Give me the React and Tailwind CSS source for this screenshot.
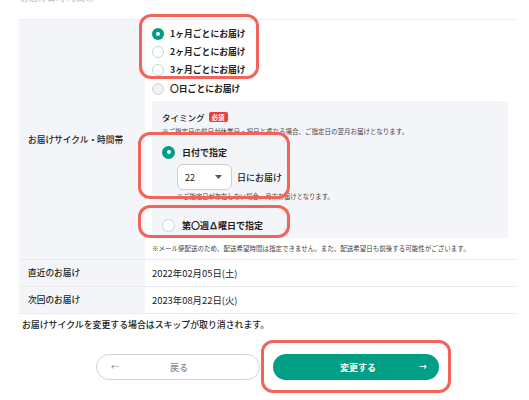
import React from "react";

function Radio({ state, size = 12 }) {
  if (state === "on") {
    return (
      <span
        className="flex items-center justify-center rounded-full bg-[#009d83] shrink-0"
        style={{ width: size, height: size }}
      >
        <span className="w-[4px] h-[4px] rounded-full bg-white" />
      </span>
    );
  }
  if (state === "gray") {
    return (
      <span
        className="rounded-full border border-[#d2d2d2] bg-[#f2f2f2] shrink-0"
        style={{ width: size, height: size }}
      />
    );
  }
  return (
    <span
      className="rounded-full border border-[#b8ddd2] bg-white shrink-0"
      style={{ width: size, height: size }}
    />
  );
}

export default function App() {
  return (
    <div className="relative w-[529px] h-[400px] overflow-hidden bg-white text-[#222] font-['Noto_Sans_CJK_JP','Noto_Sans',sans-serif]">
      {/* cut-off heading */}
      <div className="h-[19px] pl-[20px] overflow-hidden">
        <div className="-mt-[8px] text-[9px] leading-[12px] text-[#b5b5b5]">お届け日時 時間帯</div>
      </div>

      {/* table */}
      <div className="ml-[19px] w-[497px] border-t border-[#eeeeee]">
        {/* row 1 */}
        <div className="flex border-b border-[#eaeaee]">
          <div className="w-[126px] shrink-0 bg-[#f4f5f9] flex items-center pl-[9px] text-[8.7px] font-medium">
            お届けサイクル・時間帯
          </div>
          <div className="flex-1 pl-[7px] pt-[5px]">
            <div className="flex flex-col">
              {[
                ["on", "1ヶ月ごとにお届け"],
                ["off", "2ヶ月ごとにお届け"],
                ["off", "3ヶ月ごとにお届け"],
              ].map(([s, t]) => (
                <div key={t} className="h-[18px] flex items-center gap-[6px]">
                  <Radio state={s} size={12} />
                  <span className="text-[8.8px] font-bold leading-none">{t}</span>
                </div>
              ))}
              <div className="h-[18px] mt-[1px] flex items-center gap-[6px]">
                <Radio state="gray" size={12} />
                <span className="text-[8.8px] font-bold leading-none">〇日ごとにお届け</span>
              </div>
            </div>

            {/* timing box */}
            <div className="mt-[3px] w-[356px] h-[137px] bg-[#f4f5f9] pl-[10px] pt-[9px]">
              <div className="flex items-center gap-[4px] h-[14px]">
                <span className="text-[8.5px] font-medium leading-none">タイミング</span>
                <span className="bg-[#ec3b3b] text-white text-[6.5px] font-bold leading-none px-[3px] py-[2px] rounded-[2px]">必須</span>
              </div>
              <div className="mt-[2px] text-[6.5px] leading-[10px] text-[#444]">
                ※ご指定日の前日が休業日・祝日と重なる場合、ご指定日の翌月お届けとなります。
              </div>
              <div className="mt-[9px] flex items-center gap-[7px] h-[14px]">
                <Radio state="on" size={13} />
                <span className="text-[9px] font-bold leading-none">日付で指定</span>
              </div>
              <div className="mt-[5px] pl-[15px] flex items-center gap-[5px]">
                <div className="w-[55px] h-[26px] bg-white border border-[#cfcfcf] rounded-[6px] flex items-center justify-between pl-[7px] pr-[9px]">
                  <span className="text-[9px] leading-none">22</span>
                  <svg width="7" height="4" viewBox="0 0 7 4">
                    <path d="M0 0 L7 0 L3.5 4 Z" fill="#555" />
                  </svg>
                </div>
                <span className="text-[9px] font-medium leading-none">日にお届け</span>
              </div>
              <div className="mt-[2px] pl-[15px] text-[6.3px] leading-[10px] text-[#444]">
                ※ご指定日が存在しない場合、月末お届けとなります。
              </div>
              <div className="mt-[16px] flex items-center gap-[7px] h-[14px]">
                <Radio state="off" size={13} />
                <span className="text-[9px] font-bold leading-none">第〇週∆曜日で指定</span>
              </div>
            </div>
            <div className="mt-[5px] mb-[6px] text-[6.5px] leading-[10px] text-[#444]">
              ※メール便配送のため、配送希望時間は指定できません。また、配送希望日も前後する可能性がございます。
            </div>
          </div>
        </div>

        {/* row 2 */}
        <div className="flex h-[27px] border-b border-[#eaeaee]">
          <div className="w-[126px] shrink-0 bg-[#f4f5f9] flex items-center pl-[9px] text-[8.7px] font-medium">
            直近のお届け
          </div>
          <div className="flex-1 pl-[7px] flex items-center text-[9.4px]">2022年02月05日(土)</div>
        </div>
        {/* row 3 */}
        <div className="flex h-[27px] border-b border-[#eaeaee]">
          <div className="w-[126px] shrink-0 bg-[#f4f5f9] flex items-center pl-[9px] text-[8.7px] font-medium">
            次回のお届け
          </div>
          <div className="flex-1 pl-[7px] flex items-center text-[9.4px]">2023年08月22日(火)</div>
        </div>
      </div>

      <div className="pl-[22px] mt-[4px] text-[8.9px] leading-[13px] font-medium">
        お届けサイクルを変更する場合はスキップが取り消されます。
      </div>

      {/* buttons */}
      <div className="mt-[23px] flex pl-[96px] gap-[13px]">
        <div className="w-[164px] h-[26px] rounded-full border border-[#d4d4d4] bg-white flex items-center px-[14px] text-[#888]">
          <span className="text-[8px] leading-none">←</span>
          <span className="flex-1 text-center text-[9px] font-medium leading-none pr-[6px]">戻る</span>
        </div>
        <div className="w-[166px] h-[26px] rounded-full bg-[#009f86] flex items-center pl-[24px] pr-[12px] text-white">
          <span className="flex-1 text-center text-[9px] font-bold leading-none">変更する</span>
          <span className="text-[8px] leading-none font-bold">→</span>
        </div>
      </div>

      {/* red highlight overlays */}
      <div className="absolute left-[139px] top-[14px] w-[120px] h-[65px] border-[3px] border-[#f2645a] rounded-[12px] pointer-events-none" />
      <div className="absolute left-[138px] top-[132px] w-[152px] h-[67px] border-[3px] border-[#f2645a] rounded-[12px] pointer-events-none" />
      <div className="absolute left-[138px] top-[205px] w-[152px] h-[33px] border-[3px] border-[#f2645a] rounded-[12px] pointer-events-none" />
      <div className="absolute left-[261px] top-[340px] w-[190px] h-[53px] border-[3px] border-[#f2645a] rounded-[12px] pointer-events-none" />
    </div>
  );
}
